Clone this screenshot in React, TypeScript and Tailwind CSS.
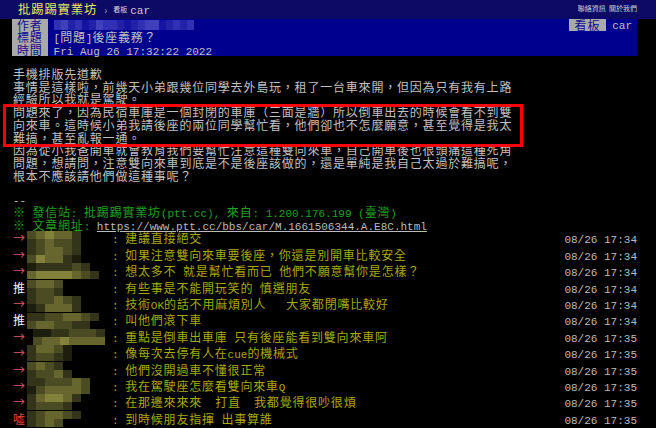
import React from "react";

const MONO = "font-['Liberation_Mono',monospace] text-[11px] tracking-normal";

function A({ t }: { t: string }) {
  const parts = t.split(/([\x00-\x7f]+)/);
  return (
    <>
      {parts.map((s, i) =>
        i % 2 === 1 ? (
          <span key={i} className={MONO}>
            {s}
          </span>
        ) : (
          <React.Fragment key={i}>{s}</React.Fragment>
        )
      )}
    </>
  );
}

const SHADES = [
  "bg-black",
  "bg-[#1e1e0e]",
  "bg-[#34341a]",
  "bg-[#4c4c24]",
  "bg-[#66662e]",
  "bg-[#82823a]",
];

const BLUES = ["bg-[#00008e]", "bg-[#1414a0]", "bg-[#2222a8]", "bg-[#3030b4]", "bg-[#4040bc]"];

function Mosaic({ top, bottom, off }: { top: string; bottom: string; off: number }) {
  return (
    <div className="w-[85px] flex flex-col justify-center">
      {[top, bottom].map((row, r) => (
        <div key={r} className="flex h-[8px]" style={{ paddingLeft: off }}>
          {row.split("").map((d, i) => (
            <span key={i} className={`w-[9px] h-[8px] ${SHADES[Number(d)]}`} />
          ))}
        </div>
      ))}
    </div>
  );
}

const body = [
  "手機排版先道歉",
  "事情是這樣啦，前幾天小弟跟幾位同學去外島玩，租了一台車來開，但因為只有我有上路",
  "經驗所以我就是駕駛。",
  "問題來了，因為民宿車庫是一個封閉的車庫（三面是牆）所以倒車出去的時候會看不到雙",
  "向來車。這時候小弟我請後座的兩位同學幫忙看，他們卻也不怎麼願意，甚至覺得是我太",
  "難搞，甚至亂報一通。",
  "因為從小我爸開車就會教育我們要幫忙注意這種雙向來車，自己開車後也很頭痛這種死角",
  "問題，想請問，注意雙向來車到底是不是後座該做的，還是單純是我自己太過於難搞呢，",
  "根本不應該請他們做這種事呢？",
];

type Push = { tag: string; text: string; time: string; top: string; bottom: string; off: number };

const pushes: Push[] = [
  { tag: "→", text: "建議直接絕交", time: "08/26 17:34", top: "345442", bottom: "234332", off: 0 },
  { tag: "→", text: "如果注意雙向來車要後座，你還是別開車比較安全", time: "08/26 17:34", top: "234432", bottom: "354421", off: 0 },
  { tag: "→", text: "想太多不 就是幫忙看而已 他們不願意幫你是怎樣？", time: "08/26 17:34", top: "1222232", bottom: "45555432", off: 0 },
  { tag: "推", text: "有些事是不能開玩笑的 慎選朋友", time: "08/26 17:34", top: "3443", bottom: "2332", off: 0 },
  { tag: "→", text: "技術OK的話不用麻煩別人   大家都閉嘴比較好", time: "08/26 17:34", top: "233432", bottom: "124442", off: 0 },
  { tag: "推", text: "叫他們滾下車", time: "08/26 17:34", top: "22334432", bottom: "3443322", off: 0 },
  { tag: "→", text: "重點是倒車出車庫 只有後座能看到雙向來車阿", time: "08/26 17:35", top: "11223332", bottom: "34454444", off: 6 },
  { tag: "→", text: "像每次去停有人在cue的機械式", time: "08/26 17:35", top: "24431", bottom: "23321", off: 0 },
  { tag: "→", text: "他們沒開過車不懂很正常", time: "08/26 17:35", top: "3432", bottom: "23342", off: 0 },
  { tag: "→", text: "我在駕駛座怎麼看雙向來車Q", time: "08/26 17:35", top: "2233343", bottom: "1344443", off: 0 },
  { tag: "→", text: "在那邊來來來  打直  我都覺得很吵很煩", time: "08/26 17:35", top: "245542", bottom: "23332", off: 0 },
  { tag: "噓", text: "到時候朋友指揮 出事算誰", time: "08/26 17:35", top: "234432", bottom: "2343", off: 0 },
];

function tagClass(tag: string) {
  if (tag === "推") return "text-[#f2f2f2]";
  if (tag === "噓") return "text-[#e04848]";
  return "text-[#e05560]";
}

export default function App() {
  const authorBlur = "34231243321234412323";
  return (
    <div className="relative w-[656px] h-[428px] overflow-hidden bg-black font-['Noto_Sans_CJK_TC',sans-serif] text-[12px] tracking-[0.8px] text-[#c0c0c0]">
      {/* top bar */}
      <div className="h-[19px] bg-[#0d0a66] flex items-center pl-[18px] pr-[19px] leading-[19px]">
        <span className="text-[#e8e860] text-[12.4px]">批踢踢實業坊</span>
        <span className="ml-[7px] text-[#aaaaaa] text-[10px] tracking-normal">›</span>
        <span className="ml-[6px] text-[7px] tracking-normal text-[#dddddd]">看板</span>
        <span className="ml-[3px] text-[#cccccc]">
          <A t="car" />
        </span>
        <span className="ml-auto mb-[4px] leading-[10px] text-[7px] tracking-normal text-[#cccccc] whitespace-pre">聯絡資訊  關於我們</span>
      </div>

      {/* meta */}
      <div className="pl-[12px] pr-[19px]">
        <div className="flex h-[12.3px] leading-[12.3px]">
          <span className="bg-[#aaaaaa] text-[#10108a] px-[5px]">作者</span>
          <div className="flex-1 bg-[#00008e] flex items-center pl-[6px] pr-[5px]">
            <div className="flex h-[10px]">
              {authorBlur.split("").map((d, i) => (
                <span key={i} className={`w-[7px] h-[10px] ${BLUES[Number(d)]}`} />
              ))}
            </div>
            <span className="ml-auto bg-[#aaaaaa] text-[#10108a] px-[6px]">看板</span>
            <span className="ml-[6px]">
              <A t="car" />
            </span>
          </div>
        </div>
        <div className="flex h-[12.3px] leading-[12.3px]">
          <span className="bg-[#aaaaaa] text-[#10108a] px-[5px]">標題</span>
          <div className="flex-1 bg-[#00008e] pl-[6px]">
            <A t="[問題]後座義務？" />
          </div>
        </div>
        <div className="flex h-[12.3px] leading-[12.3px]">
          <span className="bg-[#aaaaaa] text-[#10108a] px-[5px]">時間</span>
          <div className="flex-1 bg-[#00008e] pl-[6px]">
            <A t="Fri Aug 26 17:32:22 2022" />
          </div>
        </div>
      </div>

      {/* body */}
      <div className="pt-[12px] pl-[13px] whitespace-pre">
        {body.map((l, i) => (
          <div key={i} className="h-[12.75px] leading-[12.75px]">
            <A t={l} />
          </div>
        ))}
        <div className="h-[10.5px]" />
        <div className="h-[12.75px] leading-[12.75px]">
          <A t="--" />
        </div>
        <div className="h-[12.75px] leading-[12.75px] text-[#1fa01f]">
          <A t="※ 發信站: 批踢踢實業坊(ptt.cc), 來自: 1.200.176.199 (臺灣)" />
        </div>
        <div className="h-[12.75px] leading-[12.75px] text-[#1fa01f]">
          <A t="※ 文章網址: " />
          <span className="text-[#bbbbbb] underline underline-offset-[1px]">
            <A t="https://www.ptt.cc/bbs/car/M.1661506344.A.E8C.html" />
          </span>
        </div>
      </div>

      {/* pushes */}
      <div className="mt-[-1px] pl-[13px] pr-[19px]">
        {pushes.map((p, i) => (
          <div key={i} className="flex h-[16.4px] leading-[16.4px] whitespace-pre">
            <span className={`w-[14px] text-[12px] tracking-normal ${tagClass(p.tag)}`}>{p.tag}</span>
            <Mosaic top={p.top} bottom={p.bottom} off={p.off} />
            <div className="text-[#a8a800]">
              <A t={": " + p.text} />
            </div>
            <div className="ml-auto text-[#bbbbbb]">
              <A t={p.time} />
            </div>
          </div>
        ))}
      </div>

      {/* red annotation box */}
      <div className="absolute left-[3px] top-[104px] w-[520px] h-[43px] border-[3px] border-[#ff0000]" />
    </div>
  );
}
